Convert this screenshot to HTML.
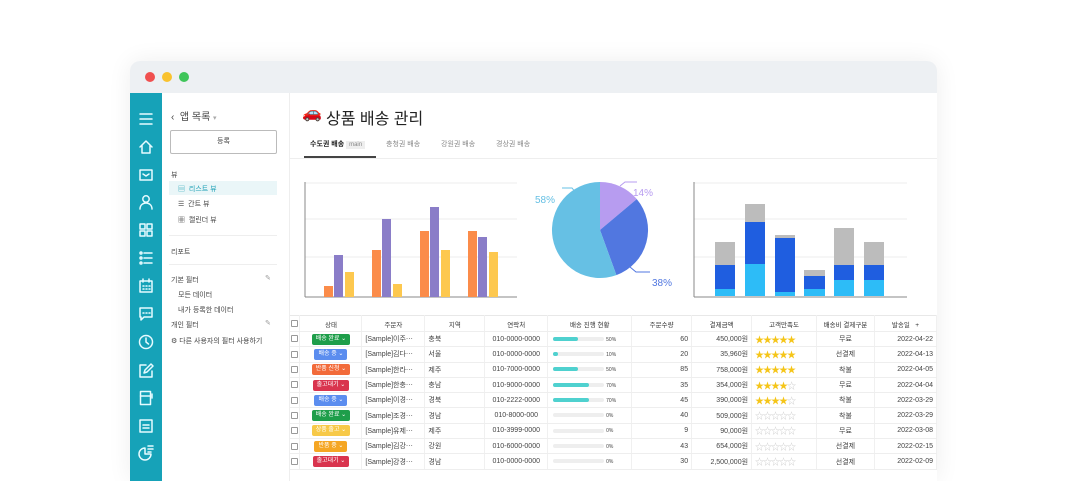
<!DOCTYPE html>
<html><head><meta charset="utf-8"><style>
*{box-sizing:border-box;margin:0;padding:0}
body{width:1066px;height:460px;overflow:hidden;background:#fff;font-family:"Liberation Sans","Noto Sans CJK KR",sans-serif;position:relative;color:#333}
.a{position:absolute}
.win{left:130px;top:61px;width:807px;height:420px;border-radius:10px 10px 0 0;box-shadow:0 0 24px rgba(0,0,0,.07);overflow:hidden;background:#fff}
.tb{left:0;top:0;width:807px;height:32px;background:#edf0f3}
.dot{width:10px;height:10px;border-radius:50%;top:11px}
.side{left:0;top:32px;width:32px;height:400px;background:#16a2b8}
.side svg{position:absolute;left:8px;width:16px;height:16px;fill:none;stroke:#e6fbff;stroke-width:1.5;stroke-linecap:round;stroke-linejoin:round}
.lp{left:32px;top:32px;width:128px;height:400px;border-right:1px solid #eee;font-size:8px;color:#444}
.t{font-size:7px;white-space:nowrap}
table{position:absolute;left:160px;top:254px;border-collapse:collapse;font-size:7px;color:#444;table-layout:fixed}
td{height:15.3px;border-bottom:1px solid #eee;border-right:1px solid #f0f0f0;white-space:nowrap;overflow:hidden;padding:0 3px}
tr.h td{height:16px;text-align:center;font-size:6.5px;color:#333;border-top:1px solid #e8e8e8}
.cb{display:inline-block;width:7px;height:7px;border:1px solid #999;border-radius:1px;vertical-align:middle}
.bd{display:inline-block;color:#fff;font-size:6px;padding:1px 4px;border-radius:2px;line-height:9px}
.pr{display:inline-block;width:51px;height:4px;background:#eee;border-radius:2px;vertical-align:middle;position:relative}
.pr i{position:absolute;left:0;top:0;height:4px;background:#4fd1cf;border-radius:2px}
.st{color:#f5c518;font-size:9px;letter-spacing:-1px}
.st0{color:#ccc;font-size:9px;letter-spacing:-1px}
</style></head><body>
<div class="a win">
 <div class="a tb"></div>
 <div class="a dot" style="left:15px;background:#f0504f"></div>
 <div class="a dot" style="left:32px;background:#f9c22e"></div>
 <div class="a dot" style="left:49px;background:#3fc55a"></div>
 <div class="a side">
  <svg style="top:18px" viewBox="0 0 16 16"><path d="M2 3h12M2 8h12M2 13h12"/></svg>
  <svg style="top:46px" viewBox="0 0 16 16"><path d="M2 8L8 2l6 6M4 6.5V14h8V6.5"/></svg>
  <svg style="top:74px" viewBox="0 0 16 16"><rect x="2" y="3" width="12" height="10"/><path d="M5 7l3 2 3-2"/></svg>
  <svg style="top:101px" viewBox="0 0 16 16"><circle cx="8" cy="5" r="3.2"/><path d="M2 15c0-4 3-6 6-6s6 2 6 6"/></svg>
  <svg style="top:129px" viewBox="0 0 16 16"><rect x="2" y="2" width="5" height="5"/><rect x="9" y="2" width="5" height="5"/><rect x="2" y="9" width="5" height="5"/><rect x="9" y="9" width="5" height="5"/></svg>
  <svg style="top:157px" viewBox="0 0 16 16"><circle cx="3" cy="3" r="1"/><circle cx="3" cy="8" r="1"/><circle cx="3" cy="13" r="1"/><path d="M6 3h8M6 8h8M6 13h8"/></svg>
  <svg style="top:185px" viewBox="0 0 16 16"><rect x="2" y="3" width="12" height="11"/><path d="M5 1v3M11 1v3M5 8h1M8 8h1M11 8h1M5 11h1M8 11h1M11 11h1"/></svg>
  <svg style="top:213px" viewBox="0 0 16 16"><path d="M2 2h12v9H6l-3 3v-3H2z"/><path d="M5 7h1M8 7h1M11 7h1"/></svg>
  <svg style="top:241px" viewBox="0 0 16 16"><circle cx="8" cy="8" r="6.5"/><path d="M8 4v4l2.5 2"/></svg>
  <svg style="top:270px" viewBox="0 0 16 16"><path d="M8 2H2v12h12V8"/><path d="M6 10l1-3 6-6 2 2-6 6z"/></svg>
  <svg style="top:297px" viewBox="0 0 16 16"><rect x="2.5" y="1.5" width="10" height="13"/><path d="M2.5 6h10M14 4v4"/></svg>
  <svg style="top:325px" viewBox="0 0 16 16"><rect x="2" y="2" width="12" height="12"/><path d="M5 7h6M5 10h6"/></svg>
  <svg style="top:352px" viewBox="0 0 16 16"><path d="M7 3a6 6 0 1 0 6 6H7z"/><path d="M10 1h5M10 4h5M10 7h3"/></svg>
 </div>
 <div class="a lp">
  <div class="a" style="left:9px;top:15px;font-size:10px">‹ &nbsp;앱 목록 <span style="color:#aaa;font-size:7px">▾</span></div>
  <div class="a" style="left:8px;top:37px;width:107px;height:24px;border:1px solid #bbb;border-radius:2px;text-align:center;line-height:22px;font-size:7px">등록</div>
  <div class="a t" style="left:9px;top:77px">뷰</div>
  <div class="a" style="left:7px;top:88px;width:108px;height:14px;background:#eaf6f8"></div>
  <div class="a t" style="left:16px;top:91px;color:#1a9fb5">▤ &nbsp;리스트 뷰</div>
  <div class="a t" style="left:16px;top:106px">☰ &nbsp;간트 뷰</div>
  <div class="a t" style="left:16px;top:122px">▦ &nbsp;캘린더 뷰</div>
  <div class="a" style="left:7px;top:142px;width:108px;height:1px;background:#eee"></div>
  <div class="a t" style="left:9px;top:154px">리포트</div>
  <div class="a" style="left:7px;top:171px;width:108px;height:1px;background:#eee"></div>
  <div class="a t" style="left:9px;top:182px">기본 필터</div>
  <div class="a t" style="left:103px;top:181px;color:#999">✎</div>
  <div class="a t" style="left:16px;top:197px">모든 데이터</div>
  <div class="a t" style="left:16px;top:212px">내가 등록한 데이터</div>
  <div class="a t" style="left:9px;top:227px">개인 필터</div>
  <div class="a t" style="left:103px;top:226px;color:#999">✎</div>
  <div class="a t" style="left:9px;top:243px">⚙ 다른 사용자의 필터 사용하기</div>
 </div>
 <div class="a" style="left:172px;top:42px;font-size:16px">🚗</div>
 <div class="a" style="left:196px;top:44px;font-size:16px;color:#222">상품 배송 관리</div>
 <div class="a t" style="left:180px;top:78px;color:#222;font-weight:bold">수도권 배송 <span style="background:#eee;color:#888;font-weight:normal;font-size:6px;padding:1px 3px">main</span></div>
 <div class="a" style="left:174px;top:95px;width:72px;height:2px;background:#444"></div>
 <div class="a t" style="left:256px;top:78px;color:#888">충청권 배송</div>
 <div class="a t" style="left:311px;top:78px;color:#888">강원권 배송</div>
 <div class="a t" style="left:366px;top:78px;color:#888">경상권 배송</div>
 <div class="a" style="left:160px;top:97px;width:647px;height:1px;background:#eee"></div>
 <svg class="a" style="left:160px;top:100px" width="647" height="150">
  <g stroke="#eee"><line x1="15" y1="22" x2="227" y2="22"/><line x1="15" y1="58" x2="227" y2="58"/><line x1="15" y1="96" x2="227" y2="96"/>
  <line x1="404" y1="22" x2="617" y2="22"/><line x1="404" y1="58" x2="617" y2="58"/><line x1="404" y1="96" x2="617" y2="96"/></g>
  <g stroke="#888"><line x1="15" y1="21" x2="15" y2="136"/><line x1="15" y1="136" x2="227" y2="136"/><line x1="404" y1="21" x2="404" y2="136"/><line x1="404" y1="136" x2="617" y2="136"/></g>
  <g fill="#fb8c4a"><rect x="34" y="125" width="9" height="11"/><rect x="82" y="89" width="9" height="47"/><rect x="130" y="70" width="9" height="66"/><rect x="178" y="70" width="9" height="66"/></g>
  <g fill="#8a7dc8"><rect x="44" y="94" width="9" height="42"/><rect x="92" y="58" width="9" height="78"/><rect x="140" y="46" width="9" height="90"/><rect x="188" y="76" width="9" height="60"/></g>
  <g fill="#fdc84f"><rect x="55" y="111" width="9" height="25"/><rect x="103" y="123" width="9" height="13"/><rect x="151" y="89" width="9" height="47"/><rect x="199" y="91" width="9" height="45"/></g>
  <path d="M310 69 L310 21 A48 48 0 0 1 346.8 38.1 Z" fill="#b79cf0"/>
  <path d="M310 69 L346.8 38.1 A48 48 0 0 1 326.4 114.1 Z" fill="#5177e0"/>
  <path d="M310 69 L326.4 114.1 A48 48 0 1 1 310 21 Z" fill="#66c0e4"/>
  <path d="M330 25 l5-4h12" stroke="#b79cf0" fill="none"/><text x="343" y="35" font-size="10" fill="#b79cf0" font-family="Liberation Sans">14%</text>
  <path d="M286 32 l-4-5h-10" stroke="#66c0e4" fill="none"/><text x="245" y="42" font-size="10" fill="#66c0e4" font-family="Liberation Sans">58%</text>
  <path d="M340 106 l6 5h14" stroke="#5177e0" fill="none"/><text x="362" y="125" font-size="10" fill="#5177e0" font-family="Liberation Sans">38%</text>
 </svg>
 <svg class="a" style="left:0;top:0" width="807" height="260">
  <g transform="translate(-130,-61)">
  <g fill="#bcbcbc"><rect x="715" y="242" width="20" height="54"/><rect x="745" y="204" width="20" height="92"/><rect x="775" y="235" width="20" height="61"/><rect x="804" y="270" width="21" height="26"/><rect x="834" y="228" width="20" height="68"/><rect x="864" y="242" width="20" height="54"/></g>
  <g fill="#1f5ee0"><rect x="715" y="265" width="20" height="31"/><rect x="745" y="222" width="20" height="74"/><rect x="775" y="238" width="20" height="58"/><rect x="804" y="276" width="21" height="20"/><rect x="834" y="265" width="20" height="31"/><rect x="864" y="265" width="20" height="31"/></g>
  <g fill="#2dbcf7"><rect x="715" y="289" width="20" height="7"/><rect x="745" y="264" width="20" height="32"/><rect x="775" y="292" width="20" height="4"/><rect x="804" y="289" width="21" height="7"/><rect x="834" y="280" width="20" height="16"/><rect x="864" y="280" width="20" height="16"/></g>
  </g>
 </svg>
 <table>
  <colgroup><col style="width:10px"><col style="width:62px"><col style="width:63px"><col style="width:60px"><col style="width:63px"><col style="width:84px"><col style="width:60px"><col style="width:60px"><col style="width:65px"><col style="width:58px"><col style="width:62px"></colgroup>
  <tr class="h"><td style="padding:0 1px"><span class="cb"></span></td><td>상태</td><td>주문자</td><td>지역</td><td>연락처</td><td>배송 진행 현황</td><td>주문수량</td><td>결제금액</td><td>고객만족도</td><td>배송비 결제구분</td><td>발송일 &nbsp; +</td></tr>
  <tr><td style="padding:0 1px"><span class="cb"></span></td><td style="text-align:center"><span class="bd" style="background:#1e9e4a">배송 완료 ⌄</span></td><td>[Sample]이주⋯</td><td>충북</td><td style="text-align:center">010-0000-0000</td><td>&nbsp;<span class="pr"><i style="width:25px"></i></span> <span style="font-size:5px">50%</span></td><td style="text-align:right">60</td><td style="text-align:right">450,000원</td><td><span class="st">★★★★★</span></td><td style="text-align:center">무료</td><td style="text-align:right">2022-04-22</td></tr>
  <tr><td style="padding:0 1px"><span class="cb"></span></td><td style="text-align:center"><span class="bd" style="background:#5b8def">배송 중 ⌄</span></td><td>[Sample]김다⋯</td><td>서울</td><td style="text-align:center">010-0000-0000</td><td>&nbsp;<span class="pr"><i style="width:5px"></i></span> <span style="font-size:5px">10%</span></td><td style="text-align:right">20</td><td style="text-align:right">35,960원</td><td><span class="st">★★★★★</span></td><td style="text-align:center">선결제</td><td style="text-align:right">2022-04-13</td></tr>
  <tr><td style="padding:0 1px"><span class="cb"></span></td><td style="text-align:center"><span class="bd" style="background:#f26b3a">반품 신청 ⌄</span></td><td>[Sample]한라⋯</td><td>제주</td><td style="text-align:center">010-7000-0000</td><td>&nbsp;<span class="pr"><i style="width:25px"></i></span> <span style="font-size:5px">50%</span></td><td style="text-align:right">85</td><td style="text-align:right">758,000원</td><td><span class="st">★★★★★</span></td><td style="text-align:center">착불</td><td style="text-align:right">2022-04-05</td></tr>
  <tr><td style="padding:0 1px"><span class="cb"></span></td><td style="text-align:center"><span class="bd" style="background:#d9344e">출고대기 ⌄</span></td><td>[Sample]한충⋯</td><td>충남</td><td style="text-align:center">010-9000-0000</td><td>&nbsp;<span class="pr"><i style="width:36px"></i></span> <span style="font-size:5px">70%</span></td><td style="text-align:right">35</td><td style="text-align:right">354,000원</td><td><span class="st">★★★★</span><span class="st0">☆</span></td><td style="text-align:center">무료</td><td style="text-align:right">2022-04-04</td></tr>
  <tr><td style="padding:0 1px"><span class="cb"></span></td><td style="text-align:center"><span class="bd" style="background:#5b8def">배송 중 ⌄</span></td><td>[Sample]이경⋯</td><td>경북</td><td style="text-align:center">010-2222-0000</td><td>&nbsp;<span class="pr"><i style="width:36px"></i></span> <span style="font-size:5px">70%</span></td><td style="text-align:right">45</td><td style="text-align:right">390,000원</td><td><span class="st">★★★★</span><span class="st0">☆</span></td><td style="text-align:center">착불</td><td style="text-align:right">2022-03-29</td></tr>
  <tr><td style="padding:0 1px"><span class="cb"></span></td><td style="text-align:center"><span class="bd" style="background:#1e9e4a">배송 완료 ⌄</span></td><td>[Sample]조경⋯</td><td>경남</td><td style="text-align:center">010-8000-000</td><td>&nbsp;<span class="pr"></span> <span style="font-size:5px">0%</span></td><td style="text-align:right">40</td><td style="text-align:right">509,000원</td><td><span class="st0">☆☆☆☆☆</span></td><td style="text-align:center">착불</td><td style="text-align:right">2022-03-29</td></tr>
  <tr><td style="padding:0 1px"><span class="cb"></span></td><td style="text-align:center"><span class="bd" style="background:#f7c948">상품 출고 ⌄</span></td><td>[Sample]유제⋯</td><td>제주</td><td style="text-align:center">010-3999-0000</td><td>&nbsp;<span class="pr"></span> <span style="font-size:5px">0%</span></td><td style="text-align:right">9</td><td style="text-align:right">90,000원</td><td><span class="st0">☆☆☆☆☆</span></td><td style="text-align:center">무료</td><td style="text-align:right">2022-03-08</td></tr>
  <tr><td style="padding:0 1px"><span class="cb"></span></td><td style="text-align:center"><span class="bd" style="background:#f5a623">반품 중 ⌄</span></td><td>[Sample]김강⋯</td><td>강원</td><td style="text-align:center">010-6000-0000</td><td>&nbsp;<span class="pr"></span> <span style="font-size:5px">0%</span></td><td style="text-align:right">43</td><td style="text-align:right">654,000원</td><td><span class="st0">☆☆☆☆☆</span></td><td style="text-align:center">선결제</td><td style="text-align:right">2022-02-15</td></tr>
  <tr><td style="padding:0 1px"><span class="cb"></span></td><td style="text-align:center"><span class="bd" style="background:#d9344e">출고대기 ⌄</span></td><td>[Sample]강경⋯</td><td>경남</td><td style="text-align:center">010-0000-0000</td><td>&nbsp;<span class="pr"></span> <span style="font-size:5px">0%</span></td><td style="text-align:right">30</td><td style="text-align:right">2,500,000원</td><td><span class="st0">☆☆☆☆☆</span></td><td style="text-align:center">선결제</td><td style="text-align:right">2022-02-09</td></tr>
 </table>
</div>
</body></html>
